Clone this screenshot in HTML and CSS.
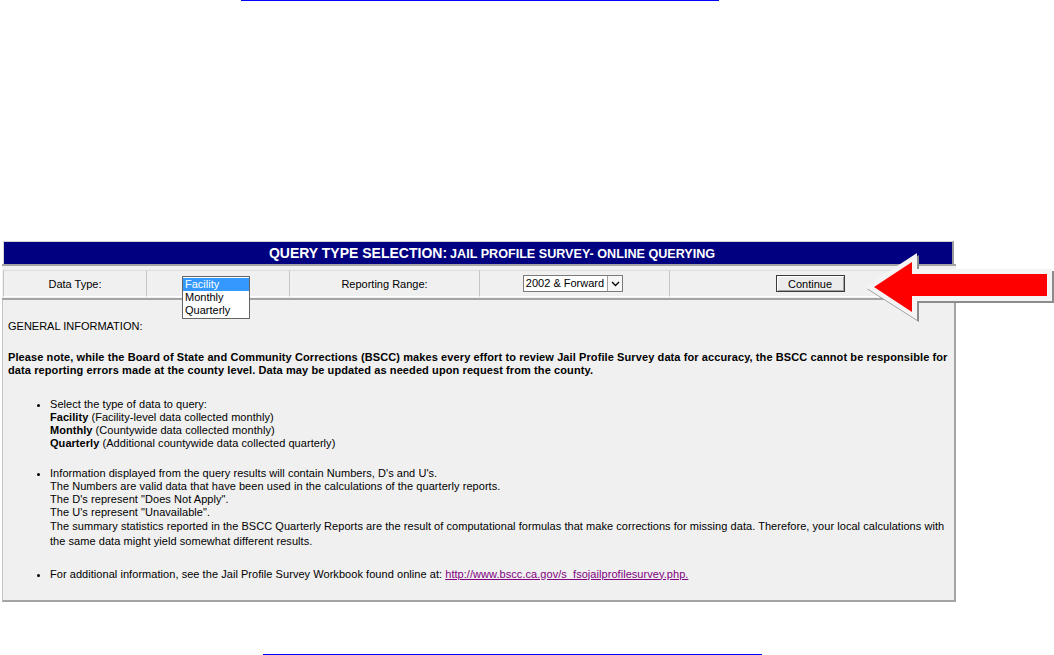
FILE: index.html
```html
<!DOCTYPE html>
<html>
<head>
<meta charset="utf-8">
<title>Query Type Selection</title>
<link rel="stylesheet" href="styles.css">
</head>
<body>
<a class="toplink" href="#"></a>
<div class="panel">
  <div class="header"><span class="big">QUERY TYPE SELECTION:</span> <span class="small">JAIL PROFILE SURVEY- ONLINE QUERYING</span></div>
  <div class="rowwrap">
    <div class="cells">
      <div class="cell">Data Type:</div>
      <div class="cell cell-list">
        <div class="popup">
          <div class="opt sel">Facility</div>
          <div class="opt">Monthly</div>
          <div class="opt">Quarterly</div>
        </div>
      </div>
      <div class="cell">Reporting Range:</div>
      <div class="cell">
        <div class="select"><span class="selval">2002 &amp; Forward</span><span class="selbtn"><svg width="9" height="6" viewBox="0 0 9 6"><path d="M1 1 L4.5 4.5 L8 1" fill="none" stroke="#000" stroke-width="1.3"/></svg></span></div>
      </div>
      <div class="cell"><button class="btn">Continue</button></div>
    </div>
  </div>
  <div class="content">
    <p class="gi">GENERAL INFORMATION:</p>
    <p class="note">Please note, while the Board of State and Community Corrections (BSCC) makes every effort to review Jail Profile Survey data for accuracy, the BSCC cannot be responsible for data reporting errors made at the county level. Data may be updated as needed upon request from the county.</p>
    <ul class="list list1">
      <li>Select the type of data to query:<br><b>Facility</b> (Facility-level data collected monthly)<br><b>Monthly</b> (Countywide data collected monthly)<br><b>Quarterly</b> (Additional countywide data collected quarterly)</li>
    </ul>
    <ul class="list list2">
      <li>Information displayed from the query results will contain Numbers, D's and U's.<br>The Numbers are valid data that have been used in the calculations of the quarterly reports.<br>The D's represent "Does Not Apply".<br>The U's represent "Unavailable".<br><span class="wrap">The summary statistics reported in the BSCC Quarterly Reports are the result of computational formulas that make corrections for missing data. Therefore, your local calculations with the same data might yield somewhat different results.</span></li>
    </ul>
    <ul class="list list3">
      <li>For additional information, see the Jail Profile Survey Workbook found online at: <a class="vlink" href="#">http://www.bscc.ca.gov/s_fsojailprofilesurvey.php.</a></li>
    </ul>
  </div>
</div>
<a class="botlink" href="#"></a>
<svg class="arrow" width="194" height="90" viewBox="0 0 194 90">
  <polygon points="7,49 59,15 59,31 194,31 194,63 59,63 59,82" fill="#8c8c8c"/>
  <polygon points="5,47 57,13 57,29 192,29 192,61 57,61 57,80" fill="#f4f4f4"/>
  <polygon points="14,47 52,22 52,34 187,34 187,56 52,56 52,72" fill="#ff0000"/>
</svg>
</body>
</html>
```
FILE: styles.css
```css
html, body {
  margin: 0;
  padding: 0;
  background: #ffffff;
}
body {
  font-family: "Liberation Sans", Arial, sans-serif;
  font-size: 11px;
  color: #000000;
  position: relative;
  width: 1054px;
  height: 655px;
  overflow: hidden;
}
.toplink {
  display: block;
  margin-left: 241px;
  width: 478px;
  height: 0;
  border-top: 1px solid #0000ff;
}
.panel {
  margin-top: 240px;
  margin-left: 2px;
  width: 954px;
}
.header {
  box-sizing: border-box;
  margin-left: 1px;
  width: 951px;
  height: 23px;
  background: #000080;
  border-top: 1px solid #d4d4d4;
  border-left: 1px solid #d4d4d4;
  border-right: 2px solid #9a9a9a;
  color: #ffffff;
  font-weight: bold;
  text-align: center;
  line-height: 23px;
  white-space: nowrap;
  padding-left: 28px;
}
.header .big { font-size: 14px; }
.header .small { font-size: 12.6px; }
.rowwrap {
  border-top: 2px solid #a4a4a4;
  border-bottom: 2px solid #a4a4a4;
  background: #f0f0f0;
  padding: 4px 3px 1px 1px;
}
.cells {
  display: grid;
  grid-template-columns: 143px 143px 190px 190px 282px;
  height: 27px;
}
.cell {
  border-left: 1px solid #c6c6c6;
  border-top: 1px solid #dcdcdc;
  border-bottom: 1px solid #ffffff;
  display: flex;
  align-items: center;
  justify-content: center;
  position: relative;
}
.cell-list { justify-content: flex-start; }
.popup {
  position: absolute;
  left: 35px;
  top: 5px;
  width: 66px;
  height: 40px;
  background: #ffffff;
  border: 1px solid #646464;
  z-index: 2;
  padding-top: 1px;
  box-sizing: content-box;
}
.opt {
  height: 13px;
  line-height: 13px;
  padding-left: 2px;
  color: #000;
}
.opt.sel {
  background: #3399ff;
  color: #ffffff;
}
.select {
  display: flex;
  align-items: stretch;
  height: 15px;
  border: 1px solid #7a7a7a;
  background: #ffffff;
  margin-left: -3px;
}
.selval {
  padding: 0 3px 0 2px;
  line-height: 15px;
  color: #000;
}
.selbtn {
  width: 14px;
  border-left: 1px solid #a0a0a0;
  display: flex;
  align-items: center;
  justify-content: center;
  background: #f6f6f6;
}
.btn {
  font-family: "Liberation Sans", Arial, sans-serif;
  font-size: 11px;
  color: #000;
  width: 69px;
  height: 17px;
  padding: 0;
  margin-left: -1px;
  background: #ececec;
  border: 1px solid #3a3a3a;
  box-shadow: inset 1px 1px 0 #ffffff, inset -1px -1px 0 #a0a0a0;
}
.content {
  background: #f0f0f0;
  border-left: 1px solid #c4c4c4;
  border-right: 2px solid #a4a4a4;
  border-bottom: 2px solid #a4a4a4;
  height: 302px;
  padding: 0 0 0 5px;
  box-sizing: border-box;
  line-height: 13px;
  overflow: hidden;
}
.content p { margin: 0; }
.gi { padding-top: 20px; }
.note {
  margin-top: 18px !important;
  font-weight: bold;
  padding-right: 2px;
  letter-spacing: 0.1px;
}
.list {
  margin: 0;
  padding-left: 42px;
  padding-right: 2px;
  list-style: disc;
  letter-spacing: 0.05px;
}
.list1 { margin-top: 21px; }
.list2 { margin-top: 17px; }
.list3 { margin-top: 18.5px; }
.list2 .wrap { line-height: 15px; display: inline-block; }
.vlink {
  color: #800080;
  text-decoration: underline;
}
.botlink {
  display: block;
  margin-top: 52px;
  margin-left: 263px;
  width: 499px;
  height: 0;
  border-top: 1px solid #0000ff;
}
.arrow {
  position: absolute;
  left: 860px;
  top: 240px;
}
```
